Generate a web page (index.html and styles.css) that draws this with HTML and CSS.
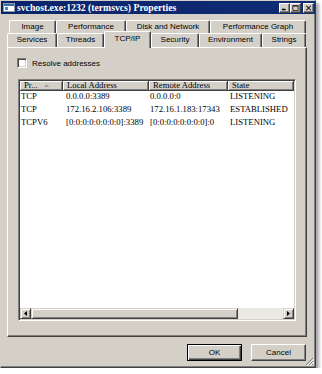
FILE: index.html
```html
<!DOCTYPE html>
<html lang="en">
<head>
  <meta charset="UTF-8">
  <title>svchost.exe:1232 (termsvcs) Properties</title>
  <link rel="stylesheet" href="styles.css">
</head>
<body>
  <div class="window">
    <div class="titlebar">
      <svg class="app-icon" width="12" height="9" viewBox="0 0 12 9">
        <rect x="0.5" y="0.5" width="11" height="8" fill="#fff" stroke="#8a9bb0"/>
        <rect x="1" y="1" width="10" height="2" fill="#3a6ea5"/>
        <rect x="2" y="4" width="3" height="3" fill="#4a8ac4"/>
      </svg>
      <span class="title">svchost.exe:1232 (termsvcs) Properties</span>
      <div class="caption-buttons">
        <span class="cap-btn">
          <svg width="9" height="8" viewBox="0 0 9 8"><rect x="1" y="5" width="5" height="2" fill="#000"/></svg>
        </span>
        <span class="cap-btn">
          <svg width="9" height="8" viewBox="0 0 9 8"><path d="M1 0.5h7v7h-7z M1 1.5h7" fill="none" stroke="#000"/></svg>
        </span>
        <span class="cap-btn close">
          <svg width="9" height="8" viewBox="0 0 9 8"><path d="M1.5 1l6 6M7.5 1l-6 6" stroke="#000" stroke-width="1.4"/></svg>
        </span>
      </div>
    </div>

    <div class="tabs">
      <div class="tab-row back">
        <div class="tab t-image">Image</div>
        <div class="tab t-perf">Performance</div>
        <div class="tab t-disk">Disk and Network</div>
        <div class="tab t-graph">Performance Graph</div>
      </div>
      <div class="tab-row front">
        <div class="tab t-services">Services</div>
        <div class="tab t-threads">Threads</div>
        <div class="tab t-tcp active">TCP/IP</div>
        <div class="tab t-security">Security</div>
        <div class="tab t-env">Environment</div>
        <div class="tab t-strings">Strings</div>
      </div>
    </div>

    <div class="sheet">
      <label class="check"><span class="box"></span>Resolve addresses</label>

      <div class="listview">
        <div class="lv-head">
          <div class="col">Pr... <svg class="sort" width="5" height="3" viewBox="0 0 5 3"><path d="M0 3L2.5 0L5 3z" fill="#a0a0a0"/></svg></div>
          <div class="col">Local Address</div>
          <div class="col">Remote Address</div>
          <div class="col">State</div>
        </div>
        <div class="lv-body">
          <div class="row"><span>TCP</span><span>0.0.0.0:3389</span><span>0.0.0.0:0</span><span>LISTENING</span></div>
          <div class="row"><span>TCP</span><span>172.16.2.106:3389</span><span>172.16.1.183:17343</span><span>ESTABLISHED</span></div>
          <div class="row"><span>TCPV6</span><span>[0:0:0:0:0:0:0:0]:3389</span><span>[0:0:0:0:0:0:0:0]:0</span><span>LISTENING</span></div>
        </div>
        <div class="hscroll">
          <span class="sb-btn"><svg width="3" height="5" viewBox="0 0 3 5"><path d="M3 0V5L0 2.5z" fill="#000"/></svg></span>
          <span class="sb-thumb"></span>
          <span class="sb-track"></span>
          <span class="sb-btn"><svg width="3" height="5" viewBox="0 0 3 5"><path d="M0 0V5L3 2.5z" fill="#000"/></svg></span>
        </div>
      </div>
    </div>

    <div class="footer">
      <button class="btn default">OK</button>
      <button class="btn">Cancel</button>
    </div>

    <svg class="grip" width="9" height="9" viewBox="0 0 9 9">
      <path d="M8 1L1 8M8 4L4 8M8 7L7 8" stroke="#808080" stroke-width="1"/>
      <path d="M9 2L2 9M9 5L5 9" stroke="#fff" stroke-width="1"/>
    </svg>
  </div>
</body>
</html>
```

FILE: styles.css
```css
body {
  margin: 0;
  background: #fff;
  font-family: "Liberation Sans", Arial, sans-serif;
  color: #000;
}

.window {
  position: relative;
  box-sizing: border-box;
  width: 316px;
  height: 368px;
  background: #d4d0c8;
  border: 1px solid;
  border-color: #d4d0c8 #404040 #404040 #d4d0c8;
  box-shadow: inset -1px -1px #808080, 3px 3px 3px rgba(0, 0, 0, 0.35);
}

/* title bar */
.titlebar {
  display: flex;
  align-items: center;
  height: 13px;
  padding: 0 1px 0 2px;
  background: linear-gradient(to right, #0a246a, #102c74);
  color: #fff;
}

.app-icon {
  flex: none;
  margin-right: 2px;
}

.title {
  font-family: "Liberation Serif", "Times New Roman", serif;
  font-weight: bold;
  font-size: 9.7px;
  line-height: 13px;
  white-space: nowrap;
}

.caption-buttons {
  display: flex;
  margin-left: auto;
}

.cap-btn {
  box-sizing: border-box;
  display: flex;
  align-items: center;
  justify-content: center;
  width: 11px;
  height: 10px;
  background: #d4d0c8;
  border: 1px solid;
  border-color: #fff #404040 #404040 #fff;
  box-shadow: inset -1px -1px #808080;
}

.cap-btn svg {
  width: 7px;
  height: 6px;
}

.cap-btn.close {
  margin-left: 2px;
}

/* tabs */
.tabs {
  margin-top: 6px;
}

.tab-row {
  display: flex;
}

.tab-row.back {
  margin-left: 8px;
  height: 13px;
}

.tab-row.front {
  margin-left: 6px;
  height: 14px;
  align-items: flex-end;
}

.tab {
  box-sizing: border-box;
  flex: none;
  height: 100%;
  border: 1px solid;
  border-color: #fff #404040 transparent #fff;
  border-bottom: none;
  border-radius: 2px 2px 0 0;
  box-shadow: inset -1px 0 #808080;
  background: #d4d0c8;
  font-size: 8px;
  line-height: 12px;
  text-align: center;
  white-space: nowrap;
}

.tab.active {
  position: relative;
  z-index: 1;
  height: 17px;
  margin-bottom: -1px;
  line-height: 14px;
}

.t-image { width: 47px; }
.t-perf { width: 70px; }
.t-disk { width: 84px; }
.t-graph { width: 96px; }
.t-services { width: 50px; }
.t-threads { width: 47px; }
.t-tcp { width: 47px; }
.t-security { width: 48px; }
.t-env { width: 63px; }
.t-strings { width: 44px; }

/* property sheet */
.sheet {
  box-sizing: border-box;
  width: 300px;
  height: 290px;
  margin-left: 6px;
  padding: 10px 9px 0 10px;
  border: 1px solid;
  border-color: #fff #404040 #404040 #fff;
  box-shadow: inset -1px -1px #808080;
}

.check {
  display: flex;
  align-items: center;
  height: 10px;
  font-size: 8px;
  margin-left: -1px;
}

.check .box {
  box-sizing: border-box;
  width: 10px;
  height: 10px;
  margin-right: 5px;
  background: #fff;
  border: 1px solid;
  border-color: #808080 #fff #fff #808080;
  box-shadow: inset 1px 1px #404040, inset -1px -1px #d4d0c8;
}

.listview {
  box-sizing: border-box;
  display: flex;
  flex-direction: column;
  width: 278px;
  height: 242px;
  margin-top: 11px;
  padding: 1px;
  border: 1px solid;
  border-color: #808080 #fff #fff #808080;
  box-shadow: inset 1px 1px #404040, inset -1px -1px #d4d0c8;
  font-family: "Liberation Serif", "Times New Roman", serif;
  font-size: 8.7px;
  background: #d4d0c8;
}

.lv-head,
.row {
  display: grid;
  grid-template-columns: 43px 86px 79px 1fr;
}

.lv-head .col {
  box-sizing: border-box;
  height: 10px;
  padding-left: 4px;
  line-height: 9px;
  border-right: 1px solid #404040;
  border-bottom: 1px solid #404040;
  box-shadow: inset 1px 1px #fff, inset -1px -1px #808080;
  white-space: nowrap;
}

.sort {
  margin-left: 4px;
  vertical-align: 1px;
}

.lv-body {
  flex: 1;
  background: #fff;
}

.row {
  height: 13px;
  line-height: 11px;
  white-space: nowrap;
}

.row:first-child {
  line-height: 10px;
}

.row span:nth-child(1) { padding-left: 1px; }
.row span:nth-child(2) { padding-left: 3px; }
.row span:nth-child(3) { padding-left: 1px; }
.row span:nth-child(4) { padding-left: 2px; }

.hscroll {
  display: flex;
  height: 11px;
}

.sb-btn,
.sb-thumb {
  box-sizing: border-box;
  display: flex;
  align-items: center;
  justify-content: center;
  height: 11px;
  background: #d4d0c8;
  border: 1px solid;
  border-color: #d4d0c8 #404040 #404040 #d4d0c8;
  box-shadow: inset 1px 1px #fff, inset -1px -1px #808080;
}

.sb-btn {
  width: 11px;
}

.sb-thumb {
  width: 207px;
}

.sb-track {
  flex: 1;
  background: #ebe9e4;
}

/* dialog buttons */
.footer {
  display: flex;
  justify-content: flex-end;
  gap: 9px;
  margin: 7px 9px 0 0;
}

.btn {
  box-sizing: border-box;
  width: 55px;
  height: 17px;
  padding: 0;
  font-family: "Liberation Sans", Arial, sans-serif;
  font-size: 8px;
  color: #000;
  background: #d4d0c8;
  border: 1px solid;
  border-color: #fff #404040 #404040 #fff;
  box-shadow: inset -1px -1px #808080;
}

.btn.default {
  border-color: #000;
  box-shadow: inset 1px 1px #fff, inset -1px -1px #404040, inset -2px -2px #808080;
}

.grip {
  position: absolute;
  right: 1px;
  bottom: 1px;
}
```
